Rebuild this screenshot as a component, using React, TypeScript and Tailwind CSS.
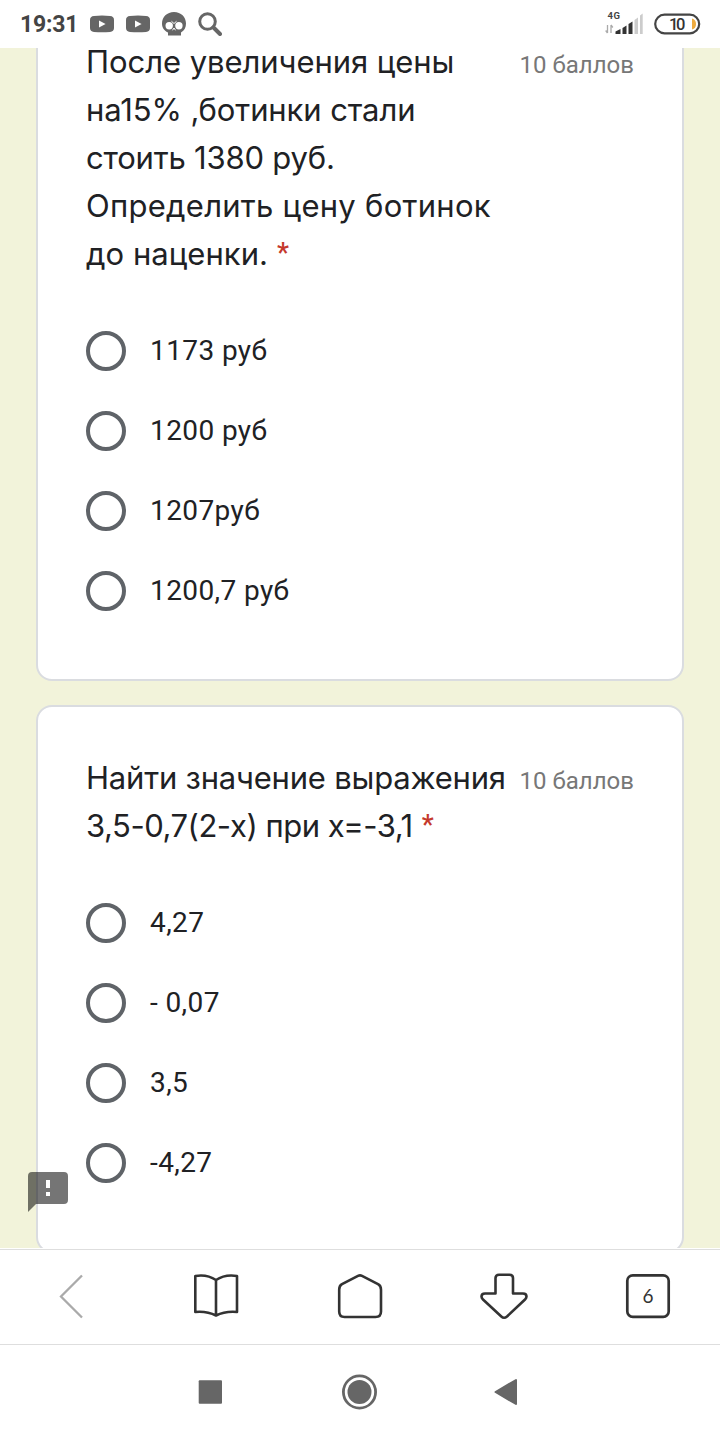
import React from "react";

type Line = { text: string; tracking: string };
type Question = { lines: Line[]; options: string[] };

const questions: Question[] = [
  {
    lines: [
      { text: "После увеличения цены", tracking: "tracking-[-0.05px]" },
      { text: "на15% ,ботинки стали", tracking: "tracking-[-0.1px]" },
      { text: "стоить 1380 руб.", tracking: "tracking-[-0.2px]" },
      { text: "Определить цену ботинок", tracking: "tracking-[0.27px]" },
      { text: "до наценки.", tracking: "tracking-[0.05px]" },
    ],
    options: ["1173 руб", "1200 руб", "1207руб", "1200,7 руб"],
  },
  {
    lines: [
      { text: "Найти значение выражения", tracking: "tracking-[-0.2px]" },
      { text: "3,5-0,7(2-х) при х=-3,1", tracking: "tracking-[-0.47px]" },
    ],
    options: ["4,27", "- 0,07", "3,5", "-4,27"],
  },
];

function YouTube() {
  return (
    <svg width="24" height="18" viewBox="0 0 24 18">
      <path d="M4 1Q12 0 20 1Q24 1.3 24 5V13Q24 16.5 20 17Q12 17.6 4 17Q0 16.5 0 13V5Q0 1.3 4 1Z" fill="#666" />
      <path d="M9 5.6L15.6 9L9 12.4Z" fill="#fff" />
    </svg>
  );
}

function StatusBar() {
  return (
    <header className="flex h-12 shrink-0 items-center justify-between bg-white pl-5 pr-[19px]">
      <div className="flex items-center gap-3">
        <span className="w-[58px] whitespace-nowrap pt-0.5 text-[23px] leading-6 font-bold tracking-[-0.2px] text-[#444]">19:31</span>
        <YouTube />
        <YouTube />
        <svg width="24" height="24" viewBox="0 0 24 24">
          <path d="M12 0C19 0 24 5 24 11.5C24 15.5 22.5 18.5 19 20.5V23.5H6V20.5C1.8 18.5 0 15.5 0 11.5C0 5 5 0 12 0Z" fill="#666" />
          <circle cx="7.2" cy="13.8" r="3.7" fill="#fff" />
          <circle cx="16.9" cy="13.8" r="3.7" fill="#fff" />
          <path d="M9.5 9.3L12 11.5L14.5 9.3M10.5 18.3L12 16L13.5 18.3" stroke="#fff" strokeWidth="1" fill="none" />
        </svg>
        <svg width="24" height="24" viewBox="0 0 24 24" fill="none" stroke="#666">
          <circle cx="9.5" cy="9.5" r="7.8" strokeWidth="3" />
          <path d="M15.5 15.5L22 22" strokeWidth="4" strokeLinecap="round" />
        </svg>
      </div>
      <div className="flex items-center gap-[11px]">
        <svg width="38" height="26" viewBox="0 0 38 26">
          <text x="2.4" y="8" fontFamily="Roboto, sans-serif" fontSize="9.5" fontWeight="700" textLength="12.5" fill="#444">4G</text>
          <path d="M2.5 14V22M0.7 19.5L2.5 22M6 22V14M6 14L7.8 16.5" stroke="#aaa" strokeWidth="1.3" fill="none" />
          <path d="M10.5 23V20.5L15.5 18V23Z" fill="#333" />
          <path d="M17.5 23V17L21.5 14.5V23Z" fill="#333" />
          <path d="M23.5 23V13L27.5 10.5V23Z" fill="#333" />
          <path d="M29.5 23V9L33 6.5V23Z" fill="#ccc" />
          <path d="M35 23V4.5L37.7 2.5V23Z" fill="#ccc" />
        </svg>
        <svg width="47" height="22" viewBox="0 0 47 22">
          <rect x="1.2" y="1.7" width="44" height="18.6" rx="9.3" fill="#fff" stroke="#444" strokeWidth="2.2" />
          <path d="M38 5.5Q42 6.5 42 11Q42 15.5 38 16.5Z" fill="#eeaa3d" />
          <text x="15" y="16.7" fontFamily="Roboto, sans-serif" fontSize="16.5" fontWeight="500" textLength="16.5" fill="#333">10</text>
        </svg>
      </div>
    </header>
  );
}

function Card({ question }: { question: Question }) {
  const last = question.lines.length - 1;
  return (
    <section className="shrink-0 rounded-2xl border-2 border-[#dadce0] bg-white p-12">
      <div className="flex justify-between">
        <h2 className="-mt-px mb-px font-['Inter',sans-serif] text-[31px] leading-[48px] text-[#202124]">
          {question.lines.map((line, i) => (
            <span key={line.text} className={`block h-12 whitespace-nowrap ${line.tracking}`}>
              {line.text}
              {i === last && (
                <span className="ml-[9px] align-[3px] font-['Roboto',sans-serif] text-[27px] leading-none font-medium text-[#c5392c]">*</span>
              )}
            </span>
          ))}
        </h2>
        <span className="-ml-10 whitespace-nowrap pt-0.5 text-[24px] leading-[48px] text-[#777]">10 баллов</span>
      </div>
      <div className="mt-8 flex flex-col">
        {question.options.map((option) => (
          <label key={option} className="flex h-20 items-center gap-6">
            <span className="size-10 rounded-full border-4 border-[#5f6368]" />
            <span className="text-[28px] leading-10 tracking-[0.4px] text-[#202124]">{option}</span>
          </label>
        ))}
      </div>
    </section>
  );
}

function Toolbar() {
  return (
    <nav className="mt-px grid h-24 shrink-0 grid-cols-5 place-items-center border-y border-[#dedede] bg-white">
      <svg width="48" height="48" viewBox="0 0 48 48" fill="none" stroke="#aaa" strokeWidth="2.3">
        <path d="M34 2.5L13 23.5L34 44.5" />
      </svg>
      <svg width="48" height="48" viewBox="0 0 48 48" fill="none" stroke="#333" strokeWidth="2.6" strokeLinejoin="round">
        <path d="M24 7Q15 1 3.3 3V39Q15 38 24 42.5Q33 38 45 39V3Q33 1 24 7V42.5" />
      </svg>
      <svg width="48" height="48" viewBox="0 0 48 48" fill="none" stroke="#333" strokeWidth="2.6" strokeLinejoin="round">
        <path d="M22 2.9Q24 1.9 26 2.9L42 11.2Q45 12.7 45 16.7V38.5Q45 44 39.5 44H8.5Q3.2 44 3.2 38.5V16.7Q3.2 12.7 6 11.2Z" />
      </svg>
      <svg width="48" height="48" viewBox="0 0 48 48" fill="none" stroke="#333" strokeWidth="2.6" strokeLinejoin="round">
        <path d="M15.5 20.5V5Q15.5 1.8 19 1.8H29.5Q33 1.8 33 5V20.5H43Q46.5 20.5 46.5 23.5Q46.5 25 45 26.5L27 43.5Q24 46 21.3 43.5L3 26.5Q1.5 25 1.5 23.5Q1.5 20.5 5 20.5Z" />
      </svg>
      <svg width="48" height="48" viewBox="0 0 48 48">
        <rect x="3.3" y="2.3" width="41.4" height="41.6" rx="5.5" fill="none" stroke="#333" strokeWidth="2.7" />
        <text x="24" y="30" textAnchor="middle" fontFamily="Lato, sans-serif" fontSize="19" fill="#333">6</text>
      </svg>
    </nav>
  );
}

function SystemNav() {
  return (
    <footer className="flex h-[95px] shrink-0 items-center gap-[112px] bg-white pb-px pl-48">
      <svg width="36" height="36" viewBox="0 0 36 36">
        <rect x="6.7" y="6.3" width="23.3" height="23.4" rx="1" fill="#666" />
      </svg>
      <svg className="overflow-visible" width="36" height="36" viewBox="0 0 36 36">
        <circle cx="19.5" cy="18" r="16.1" fill="none" stroke="#666" strokeWidth="2.8" />
        <circle cx="19.5" cy="18" r="12" fill="#666" />
      </svg>
      <svg width="36" height="36" viewBox="0 0 36 36">
        <path d="M7.5 18L28 6V30Z" fill="#666" stroke="#666" strokeWidth="2" strokeLinejoin="round" />
      </svg>
    </footer>
  );
}

export default function App() {
  return (
    <div className="flex h-[1440px] w-[720px] flex-col overflow-hidden bg-white font-['Roboto',sans-serif]">
      <StatusBar />
      <main className="relative h-[1200px] shrink-0 overflow-hidden bg-[#f2f3da] px-9">
        <div className="-mt-[59px] flex flex-col gap-6">
          {questions.map((q) => (
            <Card key={q.lines[0].text} question={q} />
          ))}
        </div>
        <svg className="absolute bottom-[36px] left-7" width="40" height="40" viewBox="0 0 40 40">
          <path d="M4 0H36Q40 0 40 4V28Q40 32 36 32H8L0 40V4Q0 0 4 0Z" fill="#000" fillOpacity="0.54" />
          <path d="M18 8H22V16H18ZM18 20H22V24H18Z" fill="#fff" />
        </svg>
      </main>
      <Toolbar />
      <SystemNav />
    </div>
  );
}
